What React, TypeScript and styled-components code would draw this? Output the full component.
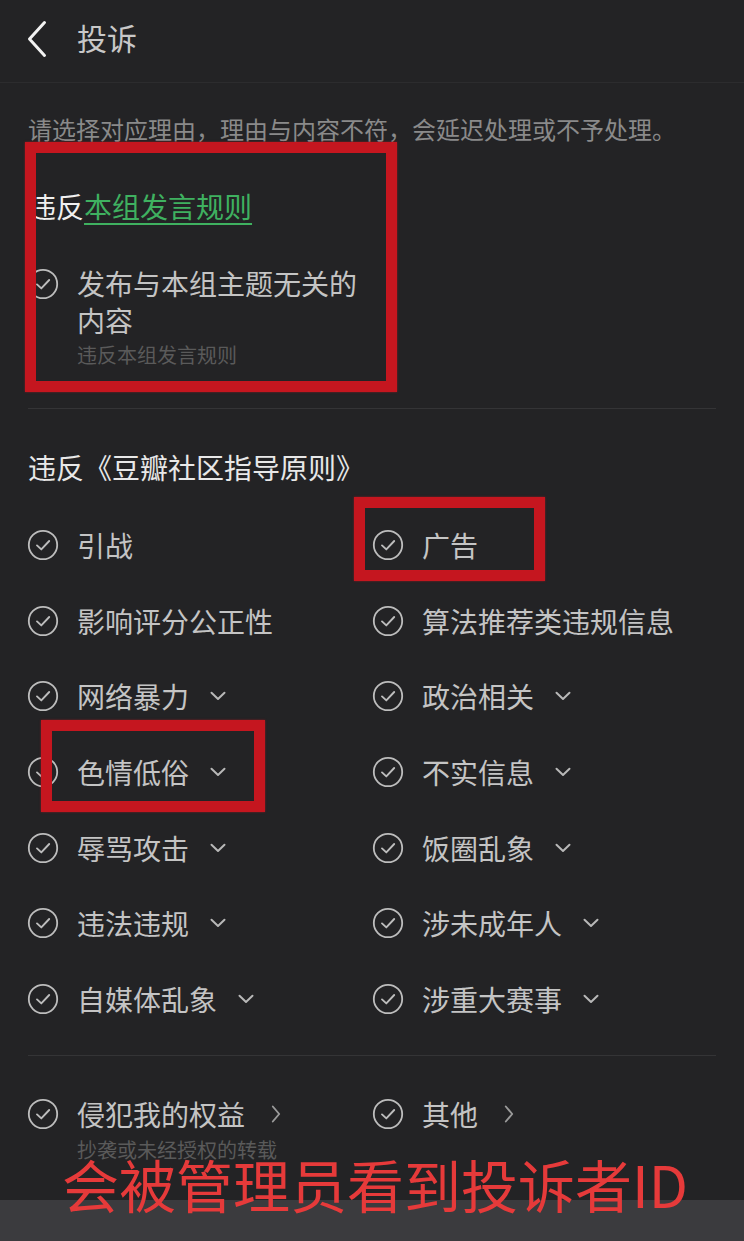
import styled, { createGlobalStyle } from 'styled-components'

const GlobalStyle = createGlobalStyle`
  html, body {
    margin: 0;
    padding: 0;
    background: #232325;
  }
  body {
    font-family: "Noto Sans CJK SC", "Noto Sans", sans-serif;
    -webkit-font-smoothing: antialiased;
  }
`

type Reason = {
  label: string
  more?: 'down' | 'right'
  sub?: string
}

const GUIDE_REASONS: Reason[] = [
  { label: '引战' },
  { label: '广告' },
  { label: '影响评分公正性' },
  { label: '算法推荐类违规信息' },
  { label: '网络暴力', more: 'down' },
  { label: '政治相关', more: 'down' },
  { label: '色情低俗', more: 'down' },
  { label: '不实信息', more: 'down' },
  { label: '辱骂攻击', more: 'down' },
  { label: '饭圈乱象', more: 'down' },
  { label: '违法违规', more: 'down' },
  { label: '涉未成年人', more: 'down' },
  { label: '自媒体乱象', more: 'down' },
  { label: '涉重大赛事', more: 'down' },
]

const OTHER_REASONS: Reason[] = [
  { label: '侵犯我的权益', more: 'right', sub: '抄袭或未经授权的转载' },
  { label: '其他', more: 'right' },
]

const CheckIcon = () => (
  <IconWrap viewBox="0 0 32 32">
    <circle cx="16" cy="16" r="14.2" fill="none" stroke="#bdbdbd" strokeWidth="1.8" />
    <path d="M10 16.4 L14.3 20.4 L22.2 12" fill="none" stroke="#bdbdbd" strokeWidth="1.9" strokeLinecap="round" strokeLinejoin="round" />
  </IconWrap>
)

const MoreIcon = ({ dir }: { dir: 'down' | 'right' }) =>
  dir === 'down' ? (
    <DownArrow viewBox="0 0 16 10">
      <path d="M1.5 1.8 L8 8 L14.5 1.8" fill="none" stroke="#b8b8b8" strokeWidth="2" strokeLinecap="round" strokeLinejoin="round" />
    </DownArrow>
  ) : (
    <RightArrow viewBox="0 0 10 18">
      <path d="M1.8 1.5 L8.2 9 L1.8 16.5" fill="none" stroke="#9a9a9a" strokeWidth="1.9" strokeLinecap="round" strokeLinejoin="round" />
    </RightArrow>
  )

const ReasonItem = ({ reason }: { reason: Reason }) => (
  <Item>
    <CheckIcon />
    <ItemBody>
      <ItemLine>
        <ItemText>{reason.label}</ItemText>
        {reason.more && <MoreIcon dir={reason.more} />}
      </ItemLine>
      {reason.sub && <SubText>{reason.sub}</SubText>}
    </ItemBody>
  </Item>
)

export default function App() {
  return (
    <Page>
      <GlobalStyle />
      <Header>
        <BackButton viewBox="0 0 22 38">
          <path d="M18.5 2.5 L3.5 19 L18.5 35.5" fill="none" stroke="#f2f2f2" strokeWidth="3" strokeLinecap="round" strokeLinejoin="round" />
        </BackButton>
        <Title>投诉</Title>
      </Header>

      <Content>
        <Notice>请选择对应理由，理由与内容不符，会延迟处理或不予处理。</Notice>

        <GroupRule>
          <SectionTitle>
            违反<RuleLink>本组发言规则</RuleLink>
          </SectionTitle>
          <GroupItem>
            <CheckIcon />
            <ItemBody>
              <WrapText>发布与本组主题无关的<br />内容</WrapText>
              <SubText>违反本组发言规则</SubText>
            </ItemBody>
          </GroupItem>
        </GroupRule>

        <Divider $gap={39} />

        <GuideTitle>违反《豆瓣社区指导原则》</GuideTitle>
        <ReasonGrid>
          {GUIDE_REASONS.map((r) => (
            <ReasonItem key={r.label} reason={r} />
          ))}
        </ReasonGrid>

        <Divider $gap={36} />

        <OtherGrid>
          {OTHER_REASONS.map((r) => (
            <ReasonItem key={r.label} reason={r} />
          ))}
        </OtherGrid>
      </Content>

      <BottomBar />

      <Highlight $top={142} $left={25} $width={372} $height={250} />
      <Highlight $top={497} $left={354} $width={191} $height={84} />
      <Highlight $top={720} $left={41} $width={224} $height={92} />
      <Caption>会被管理员看到投诉者ID</Caption>
    </Page>
  )
}

const Page = styled.div`
  position: relative;
  height: 1241px;
  display: flex;
  flex-direction: column;
  background: #232325;
  overflow: hidden;
`

const Header = styled.div`
  height: 83px;
  flex-shrink: 0;
  display: flex;
  align-items: center;
  padding: 0 0 8px 26px;
  box-sizing: border-box;
  border-bottom: 1px solid #2c2c2e;
`

const BackButton = styled.svg`
  width: 22px;
  height: 38px;
  margin-right: 29px;
  margin-top: 4px;
`

const Title = styled.div`
  font-size: 30px;
  line-height: 40px;
  color: #c8c8c8;
`

const Content = styled.div`
  flex: 1;
  padding: 0 28px;
  display: flex;
  flex-direction: column;
`

const Notice = styled.div`
  margin-top: 29px;
  font-size: 24px;
  line-height: 34px;
  color: #8a8a8a;
  white-space: nowrap;
`

const GroupRule = styled.div`
  display: flex;
  flex-direction: column;
`

const SectionTitle = styled.div`
  margin-top: 40px;
  font-size: 28px;
  line-height: 40px;
  color: #f0f0f0;
`

const RuleLink = styled.span`
  color: #3fb160;
  text-decoration: underline;
  text-decoration-thickness: 2px;
  text-underline-offset: 5px;
`

const Item = styled.div`
  display: flex;
  align-items: flex-start;
  gap: 18px;
`

const GroupItem = styled(Item)`
  margin-top: 38px;
`

const IconWrap = styled.svg`
  width: 32px;
  height: 32px;
  flex-shrink: 0;
  margin: 4px 0 0 -1px;
`

const ItemBody = styled.div`
  display: flex;
  flex-direction: column;
`

const ItemLine = styled.div`
  display: flex;
  align-items: center;
`

const ItemText = styled.span`
  font-size: 28px;
  line-height: 40px;
  color: #c4c4c4;
  white-space: nowrap;
`

const WrapText = styled.div`
  font-size: 28px;
  line-height: 37px;
  color: #c4c4c4;
  margin-top: 1px;
`

const SubText = styled.div`
  font-size: 20px;
  line-height: 28px;
  color: #5a5a5a;
  white-space: nowrap;
  margin-top: 2px;
`

const DownArrow = styled.svg`
  width: 16px;
  height: 10px;
  margin-left: 21px;
`

const RightArrow = styled.svg`
  width: 10px;
  height: 18px;
  margin-left: 26px;
`

const Divider = styled.div<{ $gap?: number }>`
  height: 1px;
  background: #343436;
  margin-top: ${(p) => p.$gap ?? 38}px;
`

const GuideTitle = styled.div`
  margin-top: 38px;
  font-size: 28px;
  line-height: 40px;
  color: #e8e8e8;
`

const ReasonGrid = styled.div`
  margin-top: 38px;
  display: grid;
  grid-template-columns: 345px 1fr;
  grid-auto-rows: 40px;
  row-gap: 35.7px;
`

const OtherGrid = styled.div`
  margin-top: 38px;
  display: grid;
  grid-template-columns: 345px 1fr;
`

const BottomBar = styled.div`
  height: 41px;
  flex-shrink: 0;
  background: #3b3b3e;
`

const Highlight = styled.div<{ $top: number; $left: number; $width: number; $height: number }>`
  position: absolute;
  top: ${(p) => p.$top}px;
  left: ${(p) => p.$left}px;
  width: ${(p) => p.$width}px;
  height: ${(p) => p.$height}px;
  box-sizing: border-box;
  border: 11px solid #c5161f;
  box-shadow: 0 0 2px rgba(200, 22, 31, 0.6);
  pointer-events: none;
`

const Caption = styled.div`
  position: absolute;
  top: 1153px;
  left: 62px;
  font-size: 57px;
  line-height: 60px;
  color: #e63a3a;
  white-space: nowrap;
  pointer-events: none;
`
